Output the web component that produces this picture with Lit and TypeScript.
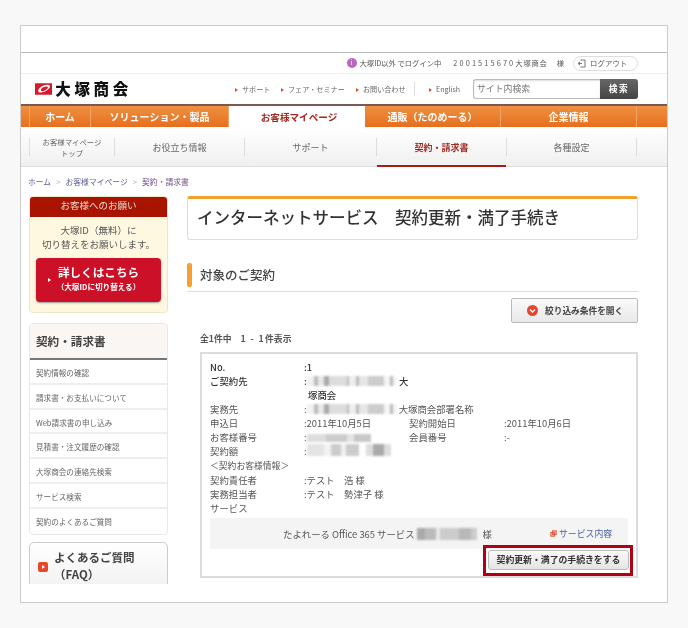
import { LitElement, html, css } from "lit";
import { customElement } from "lit/decorators.js";

const LP = "\uFF08";
const RP = "\uFF09";
const WS = "\u3000";
const LT = "\uFF1C";
const GT = "\uFF1E";
const NAV = ["ホーム", "ソリューション・製品", "お客様マイページ", `通販${LP}たのめーる${RP}`, "企業情報"];
const SUB = ["お役立ち情報", "サポート", "契約・請求書", "各種設定"];
const MENU = ["契約情報の確認", "請求書・お支払いについて", "Web請求書の申し込み", "見積書・注文履歴の確認", "大塚商会の連絡先検索", "サービス検索", "契約のよくあるご質問"];

@customElement("app-root")
export class AppRoot extends LitElement {
  static styles = css`
    :host { display: block; width: 688px; height: 628px; background: #f8f8f8; box-sizing: border-box; padding: 25px 20px 0; font-family: "Noto Sans CJK JP", "Noto Sans", sans-serif; color: #555; font-size: 9.5px; overflow: hidden; }
    * { box-sizing: border-box; }
    .frame { width: 648px; height: 578px; border: 1px solid #ccc; background: #fff; filter: blur(.3px); }
    .blank { height: 27px; border-bottom: 1px solid #bbb; }
    .top { height: 21px; display: flex; align-items: center; justify-content: flex-end; padding-right: 29px; font-size: 7.3px; color: #555; border-bottom: 1px solid #eee; }
    .dot { width: 10px; height: 10px; border-radius: 50%; background: #b868c0; margin-right: 3px; display: flex; align-items: center; justify-content: center; color: #fff; font-size: 6px; line-height: 1; }
    .login { margin-right: 1px; }
    .num { letter-spacing: 2.15px; margin-left: 11px; }
    .corp { letter-spacing: .8px; }
    .sama { margin-left: 9px; }
    .logout { width: 65px; height: 15px; margin-left: 9px; border: 1px solid #ddd; border-radius: 8px; display: flex; align-items: center; gap: 4px; padding-left: 3px; letter-spacing: .2px; }
    .head { height: 32px; display: flex; align-items: center; padding: 0 29px 0 14px; border-bottom: 2px solid #7a5a50; }
    .logo { width: 97px; display: flex; align-items: center; gap: 3px; flex: none; }
    .logo b { font-size: 15.5px; color: #111; line-height: 1; font-weight: 900; letter-spacing: 3.7px; white-space: nowrap; }
    .hlinks { display: flex; align-items: center; margin-left: 103px; font-size: 7.1px; color: #666; flex: none; height: 14px; }
    .hlinks span::before { content: ""; display: inline-block; border-left: 3px solid #e0502a; border-top: 2px solid transparent; border-bottom: 2px solid transparent; margin-right: 4px; vertical-align: 0; }
    .hlinks .l1 { width: 46px; }
    .hlinks .l2 { width: 75px; }
    .hlinks .l3 { width: 59px; border-right: 1px solid #ddd; height: 14px; line-height: 14px; }
    .hlinks .l4 { width: 44px; margin-left: 14px; }
    .search { width: 165px; height: 20px; display: flex; flex: none; margin-left: auto; }
    .search div { flex: 1; border: 1px solid #bbb; border-right: 0; border-radius: 3px 0 0 3px; font-size: 8.9px; color: #777; padding-left: 3px; line-height: 18px; background: #fff; box-shadow: inset 0 1px 2px #ddd; }
    .search b { width: 38px; background: linear-gradient(#666, #444); color: #fff; border-radius: 0 3px 3px 0; font-size: 8.7px; text-align: center; line-height: 20px; letter-spacing: 1.5px; }
    .nav { height: 21px; display: grid; grid-template-columns: 9px 61px 138px 136px 136px 136px 1fr; background: linear-gradient(#f09040, #e56f1e); color: #fff; font-weight: 700; font-size: 10px; }
    .nav > div { display: flex; align-items: center; justify-content: center; border-right: 1px solid #f2a468; white-space: nowrap; }
    .nav > div.act { background: #fff; color: #a02a20; border-right: 0; font-size: 9.6px; padding-left: 4px; }
    .nav > div.last { border: 0; }
    .sub { height: 40px; display: grid; grid-template-columns: 8px 85px 130px 132px 130px 131px; background: linear-gradient(#fff, #f0f0f0); border-bottom: 1px solid #ddd; color: #666; font-size: 9px; text-align: center; padding-top: 11px; }
    .sub > div { height: 18px; border-left: 1px solid #ddd; display: flex; align-items: center; justify-content: center; }
    .sub > div:first-child { border: 0; }
    .sub > div:last-child { border-right: 1px solid #ddd; }
    .sub .first { font-size: 7.4px; line-height: 11px; }
    .sub .on { color: #a02a20; font-weight: 700; position: relative; }
    .sub .on::after { content: ""; position: absolute; left: 0; right: 0; bottom: -11px; height: 2px; background: #a81c10; }
    .crumb { height: 29px; padding: 9px 0 0 7px; font-size: 7.8px; line-height: 12px; color: #606098; }
    .crumb i { font-style: normal; color: #aaa; margin: 0 5px; }
    .crumb em { font-style: normal; color: #70508a; }
    .main { height: 388px; overflow: hidden; display: flex; padding-left: 8px; }
    .side { width: 139px; flex: none; }
    .req { height: 117px; background: #fff8e0; border: 1px solid #eee6c8; border-radius: 4px; text-align: center; overflow: hidden; line-height: 14px; font-size: 9.5px; color: #555; }
    .req h4 { margin: -1px -1px 6px; height: 21px; background: #a81400; color: #e8d8d0; font: inherit; line-height: 19px; }
    .cta { margin: 7px 6px 0; height: 44px; background: #cc1028; border-radius: 4px; color: #fff; font-weight: 700; position: relative; box-shadow: 0 1px 2px #999; padding-top: 6px; }
    .cta::before { content: ""; position: absolute; left: 12px; top: 20px; border-left: 3px solid #fff; border-top: 2px solid transparent; border-bottom: 2px solid transparent; }
    .cta div { font-size: 11.6px; line-height: 16px; }
    .cta small { display: block; font-size: 7.6px; line-height: 14px; }
    .menu { margin-top: 10px; border: 1px solid #e8e8e8; border-radius: 4px; overflow: hidden; }
    .menu h3 { margin: 0; height: 36px; background: #faf6f3; border-bottom: 2px solid #777; font-size: 11.6px; line-height: 34px; padding-left: 6px; color: #444; }
    .menu div { height: 24.8px; border-bottom: 2px solid #eee; font-size: 7.6px; line-height: 25px; padding-left: 6px; color: #666; }
    .menu div:last-child { border-bottom: 0; }
    .faq { margin-top: 7px; height: 60px; border: 1px solid #ccc; border-radius: 5px; background: linear-gradient(#fff, #eee); display: flex; padding: 6px 0 0 8px; gap: 6px; font-size: 11.5px; font-weight: 700; line-height: 17px; color: #444; }
    .faq svg { margin-top: 13px; flex: none; }
    .faq span { display: block; }
    .content { width: 451px; margin-left: 19px; flex: none; }
    .title { height: 44px; border: 1px solid #ddd; border-top: 3px solid #f0a030; border-radius: 3px; font-size: 16.5px; font-weight: 500; color: #333; padding-left: 9px; line-height: 37px; white-space: pre; }
    .sec { margin-top: 23px; height: 29px; border-bottom: 1px solid #ddd; display: flex; gap: 8px; color: #444; font-size: 12.5px; font-weight: 500; line-height: 23px; }
    .sec::before { content: ""; width: 5px; height: 24px; border-radius: 2px; background: #f5a030; }
    .filter-row { display: flex; justify-content: flex-end; margin-top: 6px; }
    .filter { width: 127px; height: 25px; border: 1px solid #bbb; border-radius: 2px; background: linear-gradient(#fafafa, #e8e8e8); display: flex; align-items: center; gap: 7px; padding-left: 15px; font-size: 8.7px; font-weight: 700; color: #444; }
    .count { margin: 9px 0 0 13px; height: 13px; line-height: 13px; font-size: 8.8px; font-weight: 700; color: #555; white-space: pre; }
    .count span { letter-spacing: 1.4px; }
    .box { margin: 7px 0 0 13px; width: 438px; height: 226px; border: 2px solid #dcdcdc; padding: 6px 8px 0; position: relative; }
    .grid { display: grid; grid-template-columns: 94px 105px 95px 1fr; line-height: 14px; font-size: 9.4px; color: #555; }
    .grid .dk { color: #333; font-weight: 500; }
    .grid .wide { grid-column: span 3; }
    .info { font-size: 8.8px; }
    .cont { display: block; padding-left: 4px; }
    .mos { display: inline-block; height: 10px; vertical-align: -1px; filter: blur(1px); }
    .m1 { width: 90px; background: linear-gradient(90deg, #f2f2f2 0 8%, #bbb 8% 12%, #e8e8e8 12% 19%, #aaa 19% 24%, #ddd 24% 44%, #bbb 44% 47%, #eee 47% 54%, #bbb 54% 58%, #e6e6e6 58% 68%, #ccc 68% 86%, #f4f4f4 86% 92%, #bbb 92% 96%, #f4f4f4 96%); }
    .m2 { width: 64px; height: 8px; background: linear-gradient(90deg, #ddd 0 30%, #ccc 30% 62%, #e4e4e4 62% 74%, #c8c8c8 74%); }
    .m3 { width: 84px; height: 12px; background: linear-gradient(90deg, #e4e4e4 0 20%, #f2f2f2 20% 28%, #ccc 28% 40%, #f0f0f0 40% 46%, #ccc 46% 62%, #fff 62% 70%, #ddd 70% 78%, #aaa 78% 92%, #ddd 92%); }
    .m4 { width: 60px; height: 12px; background: linear-gradient(90deg, #aaa 0 14%, #bbb 14% 32%, #e8e8e8 32% 38%, #ccc 38% 70%, #b8b8b8 70% 90%, #ccc 90%); }
    .band { margin: 3px 0 0 0; width: 418px; height: 31px; background: #f4f4f4; display: flex; align-items: center; padding-left: 73px; white-space: nowrap; font-size: 9.4px; }
    .band .mos { margin: 0 6px 0 2px; }
    .band a { margin-left: 58px; color: #4a62a8; display: flex; align-items: center; gap: 2px; font-size: 8.9px; }
    .act-wrap { position: absolute; right: 3px; top: 191px; width: 150px; height: 31px; border: 3px solid #b00014; padding: 2px 0 0 2px; }
    .act-wrap div { width: 141px; height: 20px; border: 1px solid #bbb; border-radius: 3px; background: linear-gradient(#fafafa, #e4e4e4); font-size: 8.85px; font-weight: 700; color: #333; text-align: center; line-height: 18px; white-space: nowrap; }
  `;

  render() {
    const row = (a: unknown, b: unknown = "", c: unknown = "", d: unknown = "", dk = false) => html`
      <div class=${dk ? "dk" : ""}>${a}</div><div class=${dk ? "dk" : ""}>${b}</div><div>${c}</div><div>${d}</div>`;
    return html`
      <div class="frame">
        <div class="blank"></div>
        <div class="top">
          <span class="dot">i</span><span class="login">大塚ID以外 でログイン中</span>
          <span class="num">2001515670</span><span class="corp">大塚商会</span><span class="sama">様</span>
          <span class="logout">
            <svg width="9" height="9" viewBox="0 0 9 9" fill="none" stroke="#777"><path d="M3.5 1H8V8H3.5M1 4.5H5M3 3L1 4.5 3 6"/></svg>
            ログアウト
          </span>
        </div>
        <div class="head">
          <div class="logo">
            <svg width="18" height="12" viewBox="0 0 18 12"><rect width="18" height="12" fill="#d8182a"/><path d="M4 9.5C1.5 6.5 7 1.8 13 1.6 15.5 1.5 16.5 3 15 5 13 7.8 8 10.5 4 9.5Z" fill="#fff"/><path d="M6.5 8C5 6 8.5 3.5 12 3.4 13.8 3.4 14 4.5 12.5 6 11 7.4 8 8.8 6.5 8Z" fill="#d8182a"/></svg>
            <b>大塚商会</b>
          </div>
          <div class="hlinks">
            <span class="l1">サポート</span><span class="l2">フェア・セミナー</span><span class="l3">お問い合わせ</span><span class="l4">English</span>
          </div>
          <div class="search"><div>サイト内検索</div><b>検索</b></div>
        </div>
        <div class="nav">
          <div></div>
          ${NAV.map((n, i) => html`<div class=${i === 2 ? "act" : ""}>${n}</div>`)}
          <div class="last"></div>
        </div>
        <div class="sub">
          <div></div>
          <div class="first">お客様マイページ<br />トップ</div>
          ${SUB.map((s, i) => html`<div class=${i === 2 ? "on" : ""}>${s}</div>`)}
        </div>
        <div class="crumb">ホーム<i>&gt;</i>お客様マイページ<i>&gt;</i><em>契約・請求書</em></div>
        <div class="main">
          <div class="side">
            <div class="req">
              <h4>お客様へのお願い</h4>
              ${`大塚ID${LP}無料${RP}に`}<br />切り替えをお願いします。
              <div class="cta"><div>詳しくはこちら</div><small>${`${LP}大塚IDに切り替える${RP}`}</small></div>
            </div>
            <div class="menu">
              <h3>契約・請求書</h3>
              ${MENU.map((m) => html`<div>${m}</div>`)}
            </div>
            <div class="faq">
              <svg width="10" height="10" viewBox="0 0 10 10"><rect width="10" height="10" rx="2" fill="#e8452a"/><path d="M4 3L7 5 4 7Z" fill="#fff"/></svg>
              <span>よくあるご質問<br />${`${LP}FAQ${RP}`}</span>
            </div>
          </div>
          <div class="content">
            <div class="title">${`インターネットサービス${WS}契約更新・満了手続き`}</div>
            <div class="sec">対象のご契約</div>
            <div class="filter-row">
              <div class="filter">
                <svg width="11" height="11" viewBox="0 0 11 11"><circle cx="5.5" cy="5.5" r="5.5" fill="#e8432c"/><path d="M3 4.5L5.5 7 8 4.5" fill="none" stroke="#fff" stroke-width="1.5"/></svg>
                絞り込み条件を開く
              </div>
            </div>
            <div class="count">${`全1件中${WS}`}<span>1 - 1</span>件表示</div>
            <div class="box">
              <div class="grid">
                ${row("No.", ":1", "", "", true)}
                ${row("ご契約先", html`:<span class="mos m1"></span> 大`, "", "", true)}
                ${row("", html`<span class="dk cont">塚商会</span>`)}
                <div>実務先</div>
                <div class="wide">:<span class="mos m1"></span> 大塚商会部署名称</div>
                ${row("申込日", ":2011年10月5日", "契約開始日", ":2011年10月6日")}
                ${row("お客様番号", html`:<span class="mos m2"></span>`, "会員番号", ":-")}
                ${row("契約額", html`:<span class="mos m3"></span>`)}
                ${row(html`<span class="info">${LT}契約お客様情報${GT}</span>`)}
                ${row("契約責任者", `:テスト${WS}浩 様`)}
                ${row("実務担当者", `:テスト${WS}勢津子 様`)}
                ${row("サービス")}
              </div>
              <div class="band">たよれーる Office 365 サービス<span class="mos m4"></span>様<a>
                <svg width="7" height="7" viewBox="0 0 8 8" fill="none" stroke="#d9583a" stroke-width="1.3"><rect x="3" y="1" width="4" height="4"/><rect x="1" y="3" width="4" height="4"/></svg>サービス内容</a></div>
              <div class="act-wrap"><div>契約更新・満了の手続きをする</div></div>
            </div>
          </div>
        </div>
      </div>
    `;
  }
}
